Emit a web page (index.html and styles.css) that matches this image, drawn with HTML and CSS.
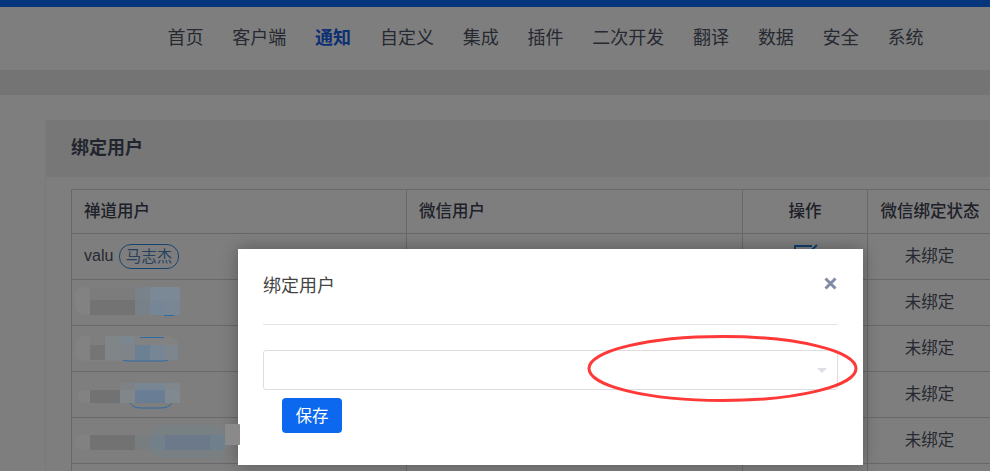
FILE: index.html
```html
<!DOCTYPE html>
<html lang="zh-CN">
<head>
<meta charset="utf-8">
<title>绑定用户</title>
<link rel="stylesheet" href="styles.css">
</head>
<body>
<div class="page">
  <div class="topbar"></div>
  <nav class="nav">
    <a>首页</a><a>客户端</a><a class="active">通知</a><a>自定义</a><a>集成</a><a>插件</a><a>二次开发</a><a>翻译</a><a>数据</a><a>安全</a><a>系统</a>
  </nav>
  <div class="strip"></div>
  <main class="main">
    <section class="panel">
      <h2 class="panel-title">绑定用户</h2>
      <table class="table">
        <colgroup><col class="c1"><col class="c2"><col class="c3"><col class="c4"></colgroup>
        <thead>
          <tr><th class="left">禅道用户</th><th class="left">微信用户</th><th>操作</th><th>微信绑定状态</th></tr>
        </thead>
        <tbody>
          <tr>
            <td class="left">valu <span class="tag">马志杰</span></td><td></td>
            <td class="op"><svg class="edit" viewBox="0 0 28 28" width="28" height="28"><path d="M21 4H4v22h20V12M13 15 26 3" fill="none" stroke="#1d7ed8" stroke-width="2"/></svg></td>
            <td>未绑定</td>
          </tr>
          <tr><td></td><td></td><td></td><td>未绑定</td></tr>
          <tr><td></td><td></td><td></td><td>未绑定</td></tr>
          <tr><td></td><td></td><td></td><td>未绑定</td></tr>
          <tr><td></td><td></td><td></td><td>未绑定</td></tr>
          <tr><td></td><td></td><td></td><td></td></tr>
        </tbody>
      </table>
    </section>
  </main>
</div>
<div class="backdrop"></div>
<div class="modal">
  <div class="modal-head">
    <h3 class="modal-title">绑定用户</h3>
    <svg class="close" viewBox="0 0 13 13" width="13" height="13"><path d="M1.500 1.500 11.500 11.500M11.500 1.500 1.500 11.500" stroke="#7f8ca3" stroke-width="3"/></svg>
  </div>
  <div class="select"><span class="caret"></span></div>
  <button class="save">保存</button>
</div>
<svg class="mosaic" viewBox="0 0 990 471" width="990" height="471">
  <g>
    <rect x="75" y="287" width="105" height="28" rx="9" fill="#828282"/>
    <rect x="90" y="287" width="45" height="13" fill="#7c7c7c"/><rect x="135" y="287" width="15" height="13" fill="#79828a"/><rect x="150" y="287" width="30" height="13" fill="#7b8996"/>
    <rect x="90" y="300" width="45" height="15" fill="#737373"/><rect x="135" y="300" width="15" height="15" fill="#788188"/><rect x="150" y="300" width="15" height="15" fill="#768696"/><rect x="165" y="300" width="15" height="15" fill="#798795"/>
    <path d="M164 315.500h10" stroke="#2a6aa8" fill="none"/>
  </g>
  <g>
    <rect x="75" y="336" width="103" height="25" rx="9" fill="#828282"/>
    <path d="M112 346c2 9 6 14 16 15h34c6 0 9-2 11-5M140 337.500h24" stroke="#2a6aa8" fill="none"/>
    <rect x="90" y="336" width="15" height="9" fill="#7e7e7e"/><rect x="105" y="336" width="30" height="9" fill="#808588"/><rect x="120" y="336" width="15" height="9" fill="#7b868e"/>
    <rect x="90" y="345" width="15" height="15" fill="#757575"/><rect x="105" y="345" width="15" height="15" fill="#808588"/><rect x="120" y="345" width="15" height="15" fill="#7e8488"/><rect x="135" y="345" width="15" height="15" fill="#6b8092"/><rect x="150" y="345" width="15" height="15" fill="#768694"/><rect x="165" y="345" width="13" height="15" fill="#7c868c"/>
  </g>
  <g>
    <path d="M130 403c3 4 6 5 12 5h18c6 0 10-2 12-5" stroke="#2a6aa8" fill="none"/>
    <rect x="78" y="390" width="102" height="13" rx="6" fill="#828282"/>
    <rect x="120" y="383" width="15" height="8" fill="#7e8285"/><rect x="135" y="383" width="30" height="8" fill="#788694"/><rect x="165" y="383" width="15" height="8" fill="#80878c"/>
    <rect x="90" y="390" width="30" height="13" fill="#727272"/><rect x="120" y="390" width="15" height="13" fill="#80868a"/><rect x="135" y="390" width="30" height="13" fill="#697d94"/><rect x="165" y="390" width="15" height="13" fill="#808990"/>
  </g>
  <g>
    <rect x="75" y="435" width="80" height="15" rx="5" fill="#818181"/>
    <rect x="150" y="425" width="75" height="33" rx="10" fill="#788084"/>
    <rect x="90" y="435" width="45" height="15" fill="#727272"/><rect x="135" y="435" width="15" height="15" fill="#787e80"/><rect x="150" y="435" width="15" height="15" fill="#737f89"/><rect x="165" y="435" width="45" height="15" fill="#6b798b"/><rect x="210" y="435" width="15" height="15" fill="#707f8c"/>
    <rect x="225" y="424" width="15" height="21" rx="1" fill="#8a8a8a"/>
  </g>
  <ellipse cx="722.500" cy="368.500" rx="133.500" ry="32" fill="none" stroke="#ff3838" stroke-width="3"/>
</svg>
</body>
</html>
```

FILE: styles.css
```css
* { box-sizing: border-box; }
html, body { margin: 0; height: 471px; overflow: hidden; background: #fff; }
body {
  position: relative;
  font-family: "Liberation Sans", "Noto Sans CJK SC", sans-serif;
  color: #4c5263;
}
.page { width: 990px; height: 471px; overflow: hidden; }
.topbar { height: 7px; background: #0a6bf5; }
.nav {
  height: 63px;
  padding: 0 0 5px 167.500px;
  display: flex;
  align-items: center;
  gap: 28.800px;
  font-size: 18px;
  background: #fdfdfd;
  white-space: nowrap;
}
.nav .active { color: #1a5fe6; font-weight: 700; }
.strip { height: 25px; background: #e8e8e8; }
.main { padding: 25px 0 0 45px; background: #fdfdfd; }
.panel { width: 1000px; border-left: 1px solid #f2f2f2; }
.panel-title {
  margin: 0;
  height: 57px;
  padding: 0 0 6px 25px;
  display: flex;
  align-items: center;
  font-size: 18px;
  font-weight: 700;
  background: #eeeeee;
  color: #444a5a;
}
.table {
  margin: 12px 0 0 25px;
  width: 923px;
  table-layout: fixed;
  border-collapse: collapse;
  font-size: 16.500px;
}
.c1 { width: 335px; }
.c2 { width: 336px; }
.c3 { width: 125px; }
.c4 { width: 127px; }
.table th, .table td {
  border: 1px solid #d0d0d6;
  padding: 0 12px;
  height: 46px;
  text-align: center;
  vertical-align: middle;
}
.table th { height: 44px; padding-bottom: 3px; font-weight: 500; color: #3c4252; }
.table th.left, .table td.left { text-align: left; }
.table td.left { padding-bottom: 1px; font-size: 16px; }
.table td:last-child { padding: 0 3px 4px 0; }
.table th:last-child { padding-left: 0; padding-right: 2px; }
.table td.op { padding: 0; }
.tag {
  display: inline-block;
  height: 25px;
  line-height: 23px;
  margin-left: 1px;
  padding: 0 6px;
  border: 1px solid #2f86da;
  border-radius: 12px;
  font-size: 15.500px;
  color: #4d84bc;
  vertical-align: middle;
}
.edit { display: block; margin: 0 auto 2px; }
.backdrop { position: absolute; inset: 0; background: rgba(0, 0, 0, .5); }
.modal {
  position: absolute;
  left: 238px;
  top: 249px;
  width: 625px;
  height: 216px;
  padding: 0 25px;
  background: #fff;
  box-shadow: 0 0 16px rgba(0, 0, 0, .3);
  color: #444;
}
.modal-head {
  height: 76px;
  display: flex;
  align-items: center;
  justify-content: space-between;
  border-bottom: 1px solid #e4e4e4;
  padding: 0 1px 5px 0;
}
.modal-title { margin: 0; font-size: 18px; font-weight: 400; }
.close { margin-bottom: 2px; }
.select {
  margin-top: 25px;
  height: 40px;
  border: 1px solid #dedede;
  border-radius: 3px;
  display: flex;
  align-items: center;
  justify-content: flex-end;
  padding-right: 10px;
}
.caret {
  width: 0;
  height: 0;
  border: 5px solid transparent;
  border-top: 5px solid #dcdfe6;
  border-bottom: 0;
}
.save {
  display: block;
  margin: 8px 0 0 19px;
  width: 60px;
  height: 35px;
  padding: 0 0 1px;
  border: 0;
  border-radius: 4px;
  background: #0b68ef;
  color: #fff;
  font: 400 16.500px "Noto Sans CJK SC", sans-serif;
}
.mosaic { position: absolute; left: 0; top: 0; pointer-events: none; }
```
